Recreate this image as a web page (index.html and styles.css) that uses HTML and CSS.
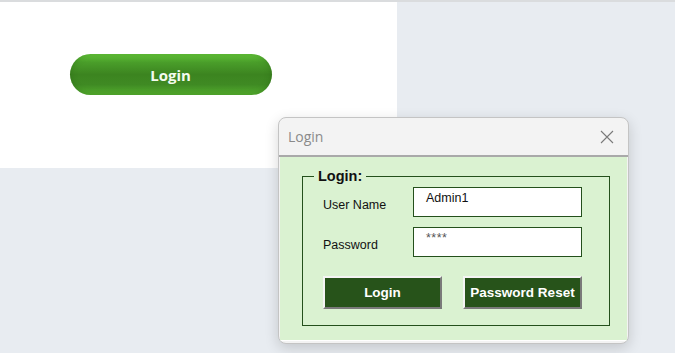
FILE: index.html
```html
<!DOCTYPE html>
<html>
<head>
<meta charset="utf-8">
<link rel="stylesheet" href="styles.css">
</head>
<body>
<div class="desktop">
  <div class="panel">
    <button class="pill">Login</button>
  </div>
  <div class="window">
    <div class="titlebar">
      <span class="title">Login</span>
      <svg class="close" width="14" height="14" viewBox="0 0 14 14"><path d="M1 1L13 13M13 1L1 13" stroke="#7a7a7a" stroke-width="1.1" fill="none"/></svg>
    </div>
    <div class="body">
      <fieldset class="group">
        <legend>Login:</legend>
        <div class="row">
          <label class="lbl">User Name</label>
          <div class="field">Admin1</div>
        </div>
        <div class="row">
          <label class="lbl">Password</label>
          <div class="field pw">****</div>
        </div>
        <div class="buttons">
          <button class="btn">Login</button>
          <button class="btn">Password Reset</button>
        </div>
      </fieldset>
    </div>
  </div>
</div>
</body>
</html>
```

FILE: styles.css
```css
html, body {
  margin: 0;
  padding: 0;
}
body {
  background: #e8ecf1;
  width: 675px;
  height: 353px;
  overflow: hidden;
}
.desktop {
  position: relative;
  border-top: 2px solid #dadcde;
  height: 351px;
}
.panel {
  width: 397px;
  height: 166px;
  background: #ffffff;
  display: flex;
  justify-content: center;
  align-items: flex-start;
  padding-top: 52px;
  padding-right: 56px;
  box-sizing: border-box;
}
.pill {
  width: 202px;
  height: 41px;
  border: none;
  border-radius: 21px;
  background: linear-gradient(to bottom, #66c93c 0%, #4a9e2a 20%, #3c8420 50%, #3f8a23 75%, #56b030 100%);
  box-shadow: inset 0 0 6px rgba(30, 80, 10, 0.35);
  color: #f4fbef;
  font-family: "Open Sans", "Liberation Sans", sans-serif;
  font-weight: 700;
  font-size: 15px;
  padding: 0;
}
.window {
  position: absolute;
  left: 278px;
  top: 115px;
  width: 351px;
  height: 227px;
  background: #f3f3f3;
  border: 1px solid #c4c4c4;
  border-radius: 8px;
  box-sizing: border-box;
  box-shadow: 0 4px 14px rgba(0, 0, 0, 0.16);
  display: flex;
  flex-direction: column;
  overflow: hidden;
}
.titlebar {
  height: 37px;
  display: flex;
  align-items: center;
  justify-content: space-between;
  padding: 0 14px 0 9px;
  border-bottom: 2px solid #a9a9a9;
  flex-shrink: 0;
}
.title {
  font-family: "Open Sans", "Noto Sans", sans-serif;
  font-size: 14px;
  color: #8a8a8a;
}
.close {
  display: block;
}
.body {
  flex: 1;
  margin: 0 1px 2px 1px;
  background: #daf2d1;
  padding: 11px 17px 0 22px;
  border-bottom: 1px solid #ffffff;
}
.group {
  margin: 0;
  border: 1px solid #24501c;
  padding: 0 0 0 20px;
  height: 158px;
  box-sizing: border-box;
}
.group legend {
  font-family: "Liberation Sans", Arial, sans-serif;
  font-weight: 700;
  font-size: 14.5px;
  color: #111;
  padding: 0 4px;
  margin-left: -9px;
}
.row {
  display: flex;
  align-items: center;
  height: 30px;
  margin-bottom: 10px;
}
.row:first-of-type {
  margin-top: 3px;
}
.lbl {
  width: 90px;
  font-family: "Liberation Sans", Arial, sans-serif;
  font-size: 12.5px;
  color: #111;
  padding-top: 6px;
}
.field {
  width: 169px;
  height: 30px;
  box-sizing: border-box;
  background: #fff;
  border: 1px solid #24501c;
  font-family: "Liberation Sans", Arial, sans-serif;
  font-size: 12.5px;
  color: #111;
  padding: 3px 0 0 12px;
}
.field.pw {
  color: #555;
  letter-spacing: 0.5px;
}
.buttons {
  display: flex;
  gap: 21px;
  margin-top: 19px;
}
.btn {
  width: 119px;
  height: 33px;
  background: #27531a;
  color: #fff;
  border: 2px solid;
  border-color: #f4f4f4 #7a7a7a #7a7a7a #f4f4f4;
  font-family: "Liberation Sans", Arial, sans-serif;
  font-weight: 700;
  font-size: 13.5px;
  padding: 0;
}
```
